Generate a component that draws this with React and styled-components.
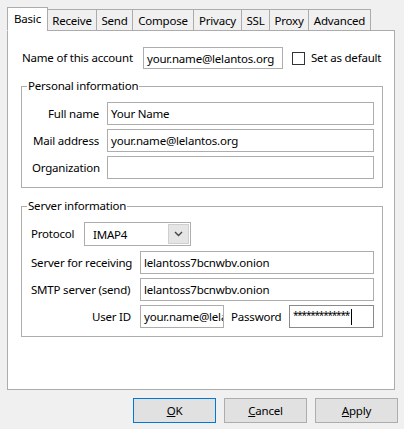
import React from 'react'
import styled, { createGlobalStyle } from 'styled-components'

const GlobalStyle = createGlobalStyle`
  html, body {
    margin: 0;
    padding: 0;
    background: #f0f0f0;
  }
  body {
    font-family: "Noto Sans", "Liberation Sans", sans-serif;
    font-size: 11.5px;
    letter-spacing: -0.2px;
    color: #000;
  }
`

const Window = styled.div`
  width: 404px;
  height: 429px;
  box-sizing: border-box;
  padding: 7px 9px 0 7px;
  background: #f0f0f0;
`

const TabBar = styled.div`
  display: flex;
  align-items: flex-end;
  height: 24px;
  position: relative;
  z-index: 1;
  margin-bottom: -1px;
`

const Tab = styled.div`
  box-sizing: border-box;
  width: ${p => p.$w}px;
  height: ${p => (p.$active ? 24 : 22)}px;
  margin-left: -1px;
  padding-top: 3px;
  border: 1px solid #acacac;
  border-bottom-color: ${p => (p.$active ? '#fff' : '#acacac')};
  background: ${p => (p.$active ? '#fff' : '#f0f0f0')};
  line-height: 16px;
  text-align: center;
  white-space: nowrap;
  &:first-child {
    margin-left: 0;
  }
`

const Panel = styled.div`
  box-sizing: border-box;
  width: 388px;
  height: 360px;
  background: #fff;
  border: 1px solid #acacac;
  padding: 16px 11px 0 13px;
`

const NameRow = styled.div`
  display: flex;
  align-items: center;
  height: 22px;
  padding-left: 1px;
`

const Label = styled.div`
  width: ${p => (p.$w ? `${p.$w}px` : 'auto')};
  flex: ${p => (p.$grow ? 1 : 'none')};
  text-align: ${p => (p.$right ? 'right' : 'left')};
  margin-left: ${p => p.$ml || 0}px;
  white-space: nowrap;
  line-height: 16px;
`

const TextBox = styled.div`
  box-sizing: border-box;
  width: ${p => (p.$w ? `${p.$w}px` : 'auto')};
  height: ${p => p.$h || 23}px;
  border: 1px solid ${p => (p.$focus ? '#8a8a8a' : '#adadad')};
  background: #fff;
  padding: 0 3px;
  display: flex;
  align-items: center;
  white-space: nowrap;
  overflow: hidden;
`

const CheckBox = styled.div`
  box-sizing: border-box;
  width: 13px;
  height: 13px;
  border: 1px solid #333;
  background: #fff;
  margin-left: 9px;
  margin-right: 6px;
`

const Group = styled.fieldset`
  box-sizing: border-box;
  width: 362px;
  margin: ${p => p.$mt}px 0 0 0;
  padding: 0;
  border: 1px solid #adadad;
  min-width: 0;
`

const Legend = styled.legend`
  padding: 0 1px;
  margin-left: 5px;
  line-height: 16px;
`

const FormGrid = styled.div`
  display: grid;
  grid-template-columns: ${p => p.$label}px 1fr;
  column-gap: ${p => p.$gap}px;
  row-gap: 4px;
  align-items: center;
  padding: ${p => p.$pad};
`

const ServerBody = styled.div`
  padding: 8px 8px 8px 9px;
`

const ProtocolRow = styled.div`
  display: flex;
  align-items: center;
  height: 24px;
  margin-bottom: 5px;
`

const Select = styled.div`
  box-sizing: border-box;
  display: flex;
  width: 107px;
  height: 24px;
  padding: 1px;
  border: 1px solid #adadad;
  background: #fff;
`

const SelectValue = styled.div`
  flex: 1;
  padding-left: 7px;
  display: flex;
  align-items: center;
`

const DropButton = styled.div`
  box-sizing: border-box;
  width: 21px;
  border: 1px solid #cfcfcf;
  background: #e5e5e5;
  display: flex;
  align-items: center;
  justify-content: center;
`

const Inline = styled.div`
  display: flex;
  align-items: center;
`

const Stars = styled.span`
  font-size: 10px;
  letter-spacing: -1.2px;
  position: relative;
  top: -2px;
`

const Caret = styled.span`
  display: inline-block;
  width: 1px;
  height: 16px;
  background: #000;
  margin-left: 2px;
`

const ButtonRow = styled.div`
  display: flex;
  justify-content: flex-end;
  gap: 8px;
  margin-top: 8px;
  margin-right: -3px;
`

const Button = styled.div`
  box-sizing: border-box;
  width: 83px;
  height: 25px;
  border: 1px solid ${p => (p.$default ? '#0078d7' : '#adadad')};
  background: #e1e1e1;
  display: flex;
  align-items: center;
  justify-content: center;
`

const tabs = [
  ['Basic', 41],
  ['Receive', 50],
  ['Send', 37],
  ['Compose', 62],
  ['Privacy', 49],
  ['SSL', 29],
  ['Proxy', 40],
  ['Advanced', 63],
]

const Chevron = () => (
  <svg width="9" height="6" viewBox="0 0 9 6">
    <path d="M1 1 L4.5 4.5 L8 1" fill="none" stroke="#444" strokeWidth="1.4" />
  </svg>
)

export default function App() {
  return (
    <Window>
      <GlobalStyle />
      <TabBar>
        {tabs.map(([name, w], i) => (
          <Tab key={name} $w={w} $active={i === 0}>
            {name}
          </Tab>
        ))}
      </TabBar>
      <Panel>
        <NameRow>
          <Label $w={121}>Name of this account</Label>
          <TextBox $w={140} $h={22}>your.name@lelantos.org</TextBox>
          <CheckBox />
          <Label>Set as default</Label>
        </NameRow>

        <Group $mt={9}>
          <Legend>Personal information</Legend>
          <FormGrid $label={67} $gap={8} $pad="8px 8px 8px 10px">
            <Label $right>Full name</Label>
            <TextBox>Your Name</TextBox>
            <Label $right>Mail address</Label>
            <TextBox>your.name@lelantos.org</TextBox>
            <Label $right>Organization</Label>
            <TextBox />
          </FormGrid>
        </Group>

        <Group $mt={10}>
          <Legend>Server information</Legend>
          <ServerBody>
            <ProtocolRow>
              <Label $w={53}>Protocol</Label>
              <Select>
                <SelectValue>IMAP4</SelectValue>
                <DropButton>
                  <Chevron />
                </DropButton>
              </Select>
            </ProtocolRow>
            <FormGrid $label={100} $gap={9} $pad="0">
              <Label>Server for receiving</Label>
              <TextBox>lelantoss7bcnwbv.onion</TextBox>
              <Label>SMTP server (send)</Label>
              <TextBox>lelantoss7bcnwbv.onion</TextBox>
              <Label $right>User ID</Label>
              <Inline>
                <TextBox $w={84}>your.name@lelantos.org</TextBox>
                <Label $grow $ml={7}>Password</Label>
                <TextBox $w={85} $focus>
                  <Stars>*************</Stars>
                  <Caret />
                </TextBox>
              </Inline>
            </FormGrid>
          </ServerBody>
        </Group>
      </Panel>
      <ButtonRow>
        <Button $default>
          <span><u>O</u>K</span>
        </Button>
        <Button>
          <span><u>C</u>ancel</span>
        </Button>
        <Button>
          <span><u>A</u>pply</span>
        </Button>
      </ButtonRow>
    </Window>
  )
}
